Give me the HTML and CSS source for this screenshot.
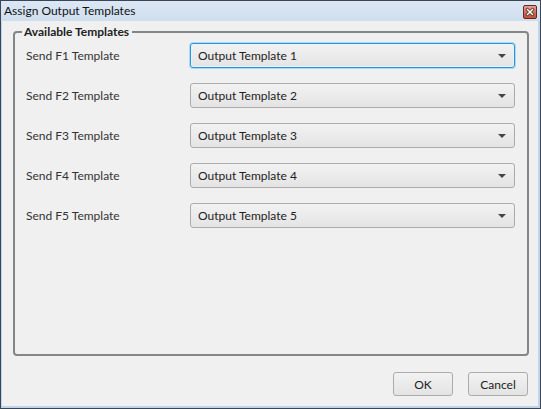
FILE: index.html
```html
<!DOCTYPE html>
<html lang="en">
<head>
<meta charset="utf-8">
<title>Assign Output Templates</title>
<link rel="stylesheet" href="styles.css">
</head>
<body>
<div class="window">
  <div class="titlebar">
    <span class="title">Assign Output Templates</span>
    <span class="close">
      <svg width="14" height="14" viewBox="0 0 14 14">
        <defs>
          <linearGradient id="cg" x1="0" y1="0" x2="0" y2="1">
            <stop offset="0" stop-color="#e8a796"/>
            <stop offset="0.5" stop-color="#d46f58"/>
            <stop offset="1" stop-color="#c2513b"/>
          </linearGradient>
        </defs>
        <rect x="0.5" y="0.5" width="13" height="13" rx="1.5" fill="url(#cg)" stroke="#5e2a22"/>
        <path d="M4.5 4.5 L9.5 9.5 M9.5 4.5 L4.5 9.5" stroke="#4a2a24" stroke-width="3" stroke-linecap="square"/>
        <path d="M4.5 4.5 L9.5 9.5 M9.5 4.5 L4.5 9.5" stroke="#ffffff" stroke-width="1.5" stroke-linecap="square"/>
      </svg>
    </span>
  </div>
  <div class="client">
    <fieldset class="group">
      <legend class="legend">Available Templates</legend>
      <div class="rows">
        <div class="row">
          <span class="label">Send F1 Template</span>
          <div class="combo focused"><span class="value">Output Template 1</span><span class="arrow"></span></div>
        </div>
        <div class="row">
          <span class="label">Send F2 Template</span>
          <div class="combo"><span class="value">Output Template 2</span><span class="arrow"></span></div>
        </div>
        <div class="row">
          <span class="label">Send F3 Template</span>
          <div class="combo"><span class="value">Output Template 3</span><span class="arrow"></span></div>
        </div>
        <div class="row">
          <span class="label">Send F4 Template</span>
          <div class="combo"><span class="value">Output Template 4</span><span class="arrow"></span></div>
        </div>
        <div class="row">
          <span class="label">Send F5 Template</span>
          <div class="combo"><span class="value">Output Template 5</span><span class="arrow"></span></div>
        </div>
      </div>
    </fieldset>
    <div class="footer">
      <button class="btn">OK</button>
      <button class="btn">Cancel</button>
    </div>
  </div>
</div>
</body>
</html>
```

FILE: styles.css
```css
html, body {
  margin: 0;
  padding: 0;
  background: #f0f0f0;
}

body {
  font-family: Lato, "Open Sans", sans-serif;
  font-size: 12px;
  color: #1e1e1e;
}

.window {
  width: 541px;
  height: 409px;
  box-sizing: border-box;
  border: 1px solid #3a4656;
  background: #bcd5ec;
  display: flex;
  flex-direction: column;
}

.titlebar {
  height: 20px;
  display: flex;
  align-items: center;
  justify-content: space-between;
  padding: 0 3px 0 3px;
  background: linear-gradient(#dce7f4, #cfdeee);
}

.title {
  color: #111;
  font-size: 12px;
  line-height: 20px;
}

.close {
  display: flex;
  margin-top: 2px;
}

.client {
  flex: 1;
  margin: 0 2px 2px 1px;
  background: #f0f0f0;
  display: flex;
  flex-direction: column;
  padding: 4px 9px 10px 11px;
}

/* group box: the legend sits on the top edge */
.group {
  flex: 1;
  margin: 0 0 16px 0;
  padding: 4px 12px 0 11px;
  border: 2px solid #868686;
  border-radius: 4px;
  min-width: 0;
}

.legend {
  font-weight: bold;
  font-size: 12px;
  color: #222;
  padding: 0 3px 0 2px;
  margin-left: -4px;
  line-height: 14px;
}

.rows {
  display: flex;
  flex-direction: column;
  gap: 15px;
}

.row {
  display: flex;
  align-items: center;
  height: 25px;
}

.label {
  width: 164px;
  color: #333;
}

.combo {
  flex: 1;
  height: 25px;
  box-sizing: border-box;
  border: 1px solid #acacac;
  border-radius: 3px;
  background: linear-gradient(#f2f2f2, #e4e4e4);
  display: flex;
  align-items: center;
  justify-content: space-between;
  padding: 0 8px 0 7px;
  color: #222;
}

.combo.focused {
  border-color: #2b95d6;
  box-shadow: 0 0 0 1px #a9d9f5, inset 0 0 0 1px #e6f3fb;
}

.arrow {
  width: 0;
  height: 0;
  border-left: 4px solid transparent;
  border-right: 4px solid transparent;
  border-top: 4px solid #444;
}

.footer {
  height: 24px;
  display: flex;
  justify-content: flex-end;
  gap: 15px;
  padding-right: 1px;
}

.btn {
  width: 60px;
  height: 24px;
  border: 1px solid #acacac;
  border-radius: 3px;
  background: linear-gradient(#f2f2f2, #e3e3e3);
  font-family: Lato, "Open Sans", sans-serif;
  font-size: 12px;
  color: #222;
  padding: 0;
}
```
